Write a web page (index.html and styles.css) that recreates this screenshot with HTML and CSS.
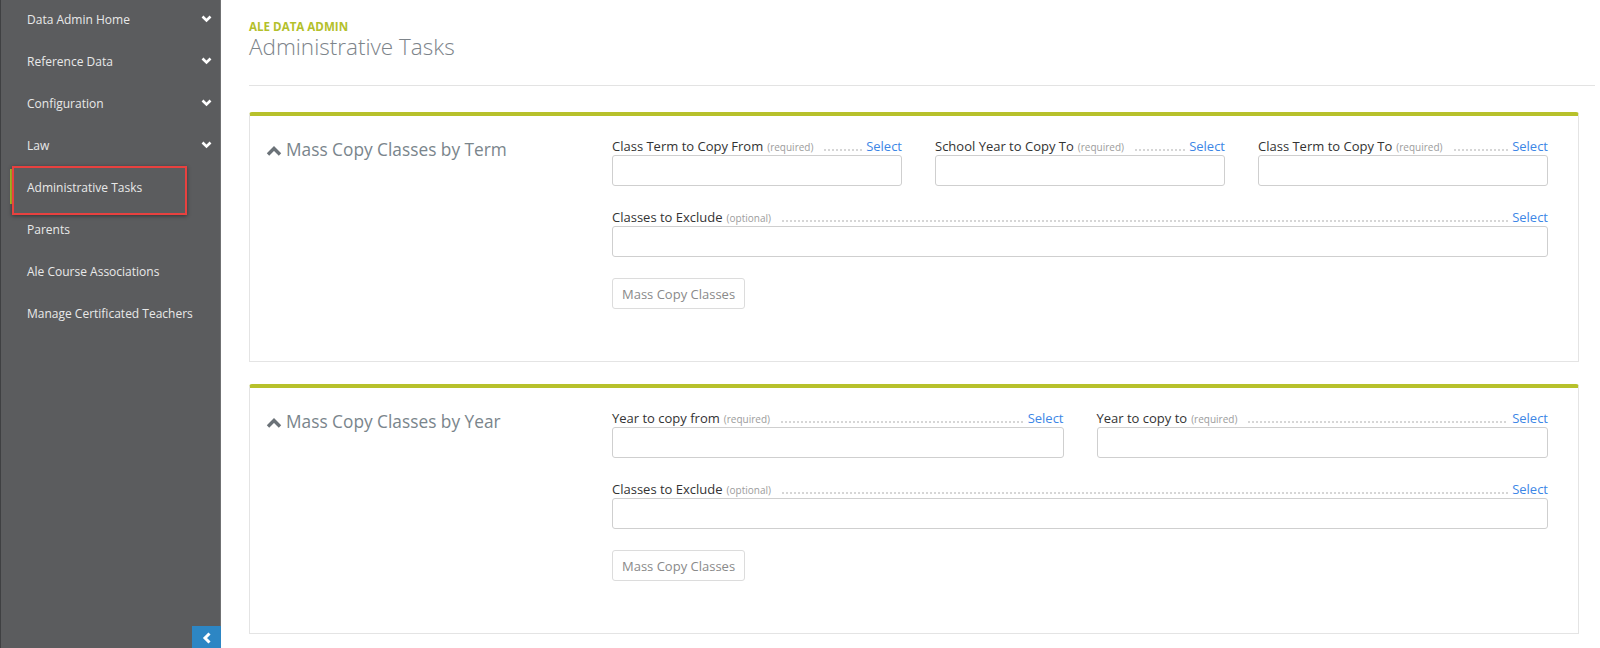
FILE: index.html
```html
<!DOCTYPE html>
<html lang="en">
<head>
<meta charset="utf-8">
<title>Administrative Tasks</title>
<link rel="stylesheet" href="styles.css">
</head>
<body>
<div class="app">
  <nav class="sidebar">
    <ul class="nav">
      <li class="nav-item"><span>Data Admin Home</span><svg class="chev" width="11" height="8" viewBox="0 0 11 8"><polyline points="1.5,1.5 5.5,5.5 9.5,1.5" fill="none" stroke="#fff" stroke-width="2.6"/></svg></li>
      <li class="nav-item"><span>Reference Data</span><svg class="chev" width="11" height="8" viewBox="0 0 11 8"><polyline points="1.5,1.5 5.5,5.5 9.5,1.5" fill="none" stroke="#fff" stroke-width="2.6"/></svg></li>
      <li class="nav-item"><span>Configuration</span><svg class="chev" width="11" height="8" viewBox="0 0 11 8"><polyline points="1.5,1.5 5.5,5.5 9.5,1.5" fill="none" stroke="#fff" stroke-width="2.6"/></svg></li>
      <li class="nav-item"><span>Law</span><svg class="chev" width="11" height="8" viewBox="0 0 11 8"><polyline points="1.5,1.5 5.5,5.5 9.5,1.5" fill="none" stroke="#fff" stroke-width="2.6"/></svg></li>
      <li class="nav-item active"><span>Administrative Tasks</span></li>
      <li class="nav-item"><span>Parents</span></li>
      <li class="nav-item"><span>Ale Course Associations</span></li>
      <li class="nav-item"><span>Manage Certificated Teachers</span></li>
    </ul>
    <button class="collapse" type="button"><svg width="10" height="12" viewBox="0 0 10 12"><polyline points="7.5,1.5 3,6 7.5,10.5" fill="none" stroke="#fff" stroke-width="3"/></svg></button>
  </nav>
  <main class="main">
    <header class="page-header">
      <div class="eyebrow">ALE DATA ADMIN</div>
      <h1 class="title">Administrative Tasks</h1>
    </header>

    <section class="card">
      <div class="card-head">
        <svg class="up" width="16" height="10" viewBox="0 0 16 10"><polyline points="2,8.5 8,2.5 14,8.5" fill="none" stroke="#6b7278" stroke-width="3.4"/></svg>
        <h2 class="card-title">Mass Copy Classes by Term</h2>
      </div>
      <div class="card-body">
        <div class="row cols-3">
          <div class="field">
            <div class="label"><span class="name">Class Term to Copy From</span><span class="hint">(required)</span><span class="dots"></span><a class="select">Select</a></div>
            <div class="input"></div>
          </div>
          <div class="field">
            <div class="label"><span class="name">School Year to Copy To</span><span class="hint">(required)</span><span class="dots"></span><a class="select">Select</a></div>
            <div class="input"></div>
          </div>
          <div class="field">
            <div class="label"><span class="name">Class Term to Copy To</span><span class="hint">(required)</span><span class="dots"></span><a class="select">Select</a></div>
            <div class="input"></div>
          </div>
        </div>
        <div class="row">
          <div class="field">
            <div class="label"><span class="name">Classes to Exclude</span><span class="hint">(optional)</span><span class="dots"></span><a class="select">Select</a></div>
            <div class="input"></div>
          </div>
        </div>
        <button class="btn" type="button">Mass Copy Classes</button>
      </div>
    </section>

    <section class="card">
      <div class="card-head">
        <svg class="up" width="16" height="10" viewBox="0 0 16 10"><polyline points="2,8.5 8,2.5 14,8.5" fill="none" stroke="#6b7278" stroke-width="3.4"/></svg>
        <h2 class="card-title">Mass Copy Classes by Year</h2>
      </div>
      <div class="card-body">
        <div class="row cols-2">
          <div class="field">
            <div class="label"><span class="name">Year to copy from</span><span class="hint">(required)</span><span class="dots"></span><a class="select">Select</a></div>
            <div class="input"></div>
          </div>
          <div class="field">
            <div class="label"><span class="name">Year to copy to</span><span class="hint">(required)</span><span class="dots"></span><a class="select">Select</a></div>
            <div class="input"></div>
          </div>
        </div>
        <div class="row">
          <div class="field">
            <div class="label"><span class="name">Classes to Exclude</span><span class="hint">(optional)</span><span class="dots"></span><a class="select">Select</a></div>
            <div class="input"></div>
          </div>
        </div>
        <button class="btn" type="button">Mass Copy Classes</button>
      </div>
    </section>
  </main>
</div>
</body>
</html>
```

FILE: styles.css
```css
* { box-sizing: border-box; }
html, body { margin: 0; padding: 0; }
body {
  font-family: "Open Sans", "Liberation Sans", sans-serif;
  background: #fff;
  color: #333;
  width: 1600px;
  height: 648px;
  overflow: hidden;
}
.app {
  display: flex;
  height: 648px;
}

/* Sidebar */
.sidebar {
  position: relative;
  width: 221px;
  flex: 0 0 221px;
  height: 648px;
  background: #5b5c5e;
  border-right: 1px solid #707173;
  box-shadow: inset 1px 0 0 #3f4042;
}
.nav {
  list-style: none;
  margin: 0;
  padding: 0;
}
.nav-item {
  position: relative;
  display: flex;
  align-items: center;
  justify-content: space-between;
  height: 42px;
  padding: 11px 8px 13px 27px;
  line-height: 18px;
  font-size: 12px;
  color: #e9e9e9;
}
.nav-item .chev { flex: 0 0 auto; margin-top: -2px; }
.nav-item.active::before {
  content: "";
  position: absolute;
  left: 10px;
  top: 1px;
  width: 3px;
  height: 35px;
  background: #b5c22a;
}
.nav-item.active::after {
  content: "";
  position: absolute;
  left: 12px;
  top: -2px;
  width: 171px;
  height: 45px;
  border: 2px solid #e8413f;
  box-shadow: 0 1px 4px rgba(0,0,0,0.45);
}
.collapse {
  position: absolute;
  right: -1px;
  bottom: -8px;
  width: 29px;
  height: 30px;
  margin: 0;
  padding: 0 0 6px 0;
  border: 0;
  background: #2d86c4;
  display: flex;
  align-items: center;
  justify-content: center;
}

/* Main */
.main {
  flex: 1 1 auto;
  padding: 0 5px 0 28px;
}
.page-header {
  padding-top: 20px;
  padding-bottom: 24px;
  border-bottom: 1px solid #e3e3e3;
}
.eyebrow {
  font-size: 11.6px;
  line-height: 13px;
  font-weight: 700;
  color: #b3c02b;
}
.title {
  margin: 0;
  font-size: 22.5px;
  line-height: 28px;
  font-weight: 300;
  color: #7d848a;
}

.card {
  display: flex;
  margin: 26px 16px 0 0;
  height: 250px;
  border: 1px solid #e4e4e4;
  border-top: 4px solid #b7c12b;
  border-radius: 3px 3px 0 0;
  padding: 21px 30px 0 16px;
}
.card + .card { margin-top: 22px; }
.card-head {
  flex: 0 0 346px;
  display: flex;
  align-items: flex-start;
  padding-top: 2px;
}
.card-head .up { margin-top: 7px; margin-right: 4px; flex: 0 0 auto; }
.card-title {
  margin: 0;
  font-size: 17.3px;
  line-height: 22px;
  font-weight: 400;
  color: #7a858c;
}
.card-body {
  flex: 1 1 auto;
  display: flex;
  flex-direction: column;
  align-items: flex-start;
}
.row {
  display: grid;
  grid-template-columns: 1fr;
  column-gap: 33px;
  width: 100%;
  margin-bottom: 22px;
}
.row.cols-3 { grid-template-columns: 1fr 1fr 1fr; }
.row.cols-2 { grid-template-columns: 1fr 1fr; }
.label {
  display: flex;
  align-items: baseline;
  height: 18px;
  line-height: 18px;
  white-space: nowrap;
}
.name { font-size: 13px; color: #333; }
.hint { font-size: 10px; color: #9c9c9c; margin-left: 4px; }
.dots {
  flex: 1 1 auto;
  align-self: flex-end;
  height: 2px;
  margin: 0 4px 4px 10px;
  background-image: radial-gradient(circle, #d6d6d6 0.9px, transparent 1.1px);
  background-size: 4px 2px;
  background-repeat: repeat-x;
}
.select {
  font-size: 13px;
  color: #3d86e6;
  cursor: pointer;
}
.input {
  height: 31px;
  border: 1px solid #cfcfcf;
  border-radius: 3px;
  background: #fff;
}
.btn {
  margin-top: -1px;
  height: 31px;
  padding: 0 9px;
  font-family: "Open Sans", "Liberation Sans", sans-serif;
  font-size: 13px;
  color: #8a8a8a;
  background: #fff;
  border: 1px solid #dcdcdc;
  border-radius: 3px;
}
```
